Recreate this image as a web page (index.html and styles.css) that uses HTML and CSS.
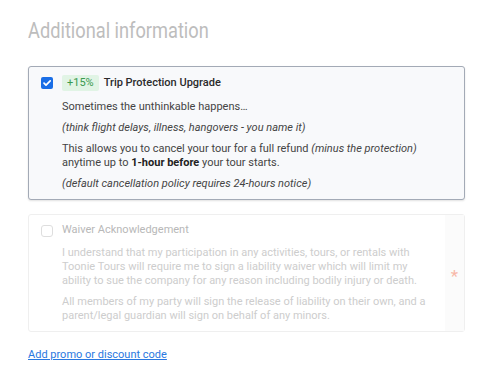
FILE: index.html
```html
<!DOCTYPE html>
<html>
<head>
<meta charset="utf-8">
<link rel="stylesheet" href="styles.css">
</head>
<body>
<div class="page">
  <h2 class="heading">Additional information</h2>

  <label class="card card-active">
    <div class="card-main">
      <span class="check check-on">
        <svg viewBox="0 0 12 12" width="12" height="12"><path d="M3 6.2 L5 8.2 L9.2 3.8" fill="none" stroke="#fff" stroke-width="1.7" stroke-linecap="round" stroke-linejoin="round"/></svg>
      </span>
      <div class="content">
        <div class="title-row">
          <span class="badge">+15%</span>
          <span class="title">Trip Protection Upgrade</span>
        </div>
        <p>Sometimes the unthinkable happens…</p>
        <p><em>(think flight delays, illness, hangovers - you name it)</em></p>
        <p>This allows you to cancel your tour for a full refund <em>(minus the protection)</em> anytime up to <strong>1-hour before</strong> your tour starts.</p>
        <p><em>(default cancellation policy requires 24-hours notice)</em></p>
      </div>
    </div>
  </label>

  <label class="card card-disabled">
    <div class="card-main">
      <span class="check check-off"></span>
      <div class="content">
        <div class="title-row">
          <span class="title title-muted">Waiver Acknowledgement</span>
        </div>
        <p>I understand that my participation in any activities, tours, or rentals with Toonie Tours will require me to sign a liability waiver which will limit my ability to sue the company for any reason including bodily injury or death.</p>
        <p>All members of my party will sign the release of liability on their own, and a parent/legal guardian will sign on behalf of any minors.</p>
      </div>
    </div>
    <div class="required"><span class="asterisk">*</span></div>
  </label>

  <a class="promo" href="#">Add promo or discount code</a>
</div>
</body>
</html>
```
FILE: styles.css
```css
* { box-sizing: border-box; }
html, body { margin: 0; padding: 0; background: #fff; }
body { font-family: Roboto, "Noto Sans", sans-serif; color: #3c3c3c; }
.page { padding: 17px 0 0 28px; width: 466px; }
.heading {
  margin: 0 0 23px 0;
  font-size: 22.5px;
  line-height: 26px;
  font-weight: 400;
  color: #bdbdbd;
  white-space: nowrap;
  transform: scaleX(0.81);
  transform-origin: 0 0;
}
.card {
  display: flex;
  border-radius: 3px;
  width: 437px;
}
.card-active {
  background: #f8f9fb;
  border: 1px solid #a3aab6;
  box-shadow: 0 1px 2px rgba(0,0,0,0.12);
  margin-bottom: 14px;
}
.card-disabled {
  background: #fff;
  border: 1px solid #efefef;
  margin-bottom: 11px;
}
.card-main {
  flex: 1;
  display: flex;
  align-items: flex-start;
  padding: 8px 12px 8px 12px;
}
.check {
  flex: none;
  width: 12px;
  height: 12px;
  margin-top: 2px;
  margin-right: 9px;
  border-radius: 2px;
  display: flex;
}
.check-on { background: #1a6ee6; }
.check-off { border: 1px solid #dedede; border-radius: 3px; margin-top: 3px; }
.content { flex: 1; font-size: 11px; line-height: 14px; }
.title-row { display: flex; align-items: center; height: 16px; margin-bottom: 9px; }
.badge {
  background: #e1f4e5;
  color: #3a9a4f;
  border-radius: 2px;
  padding: 0 5px;
  height: 16px;
  line-height: 16px;
  font-size: 11px;
  margin-right: 5px;
}
.title { font-weight: 500; font-size: 11px; color: #2b2b2b; }
.title-muted { font-weight: 400; color: #b8b8b8; }
.content p { margin: 0 0 7px 0; }
.content p:last-child { margin-bottom: 0; }
.card-active .content p { color: #444; }
.card-active strong { color: #222; font-weight: 700; }
.card-disabled .card-main { padding-top: 7px; padding-bottom: 8px; }
.card-disabled .content { color: #cdcdcd; }
.card-disabled .title-row { margin-bottom: 8px; }
.required {
  flex: none;
  width: 19px;
  background: #fbfbfb;
  display: flex;
  align-items: center;
  justify-content: center;
}
.asterisk { color: #f8b8a8; font-size: 17px; line-height: 1; margin-top: 6px; }
.promo {
  display: inline-block;
  font-size: 11px;
  line-height: 14px;
  color: #2a78e0;
  text-decoration: underline;
}
```
